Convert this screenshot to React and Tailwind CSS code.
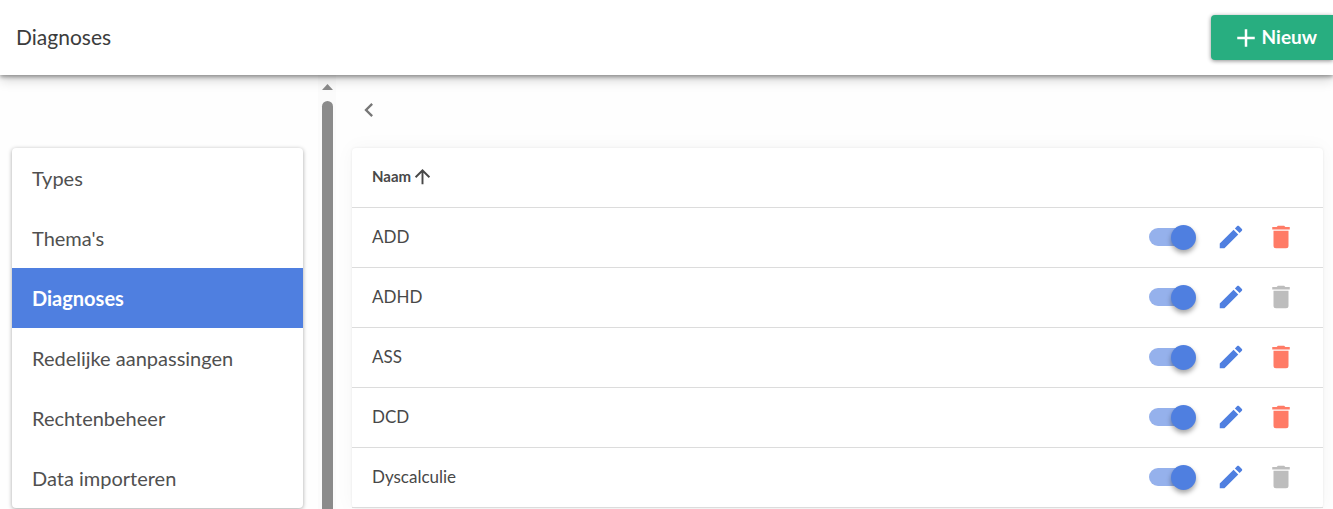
import React, { useState } from 'react'

const MENU = ['Types', "Thema's", 'Diagnoses', 'Redelijke aanpassingen', 'Rechtenbeheer', 'Data importeren']

const DIAGNOSES = [
  { name: 'ADD', active: true, removable: true },
  { name: 'ADHD', active: true, removable: false },
  { name: 'ASS', active: true, removable: true },
  { name: 'DCD', active: true, removable: true },
  { name: 'Dyscalculie', active: true, removable: false },
]

const PATHS = {
  plus: 'M19,13H13V19H11V13H5V11H11V5H13V11H19V13Z',
  chevronLeft: 'M15.41,16.58L10.83,12L15.41,7.41L14,6L8,12L14,18L15.41,16.58Z',
  arrowUp: 'M13,20H11V8L5.5,13.5L4.08,12.08L12,4.16L19.92,12.08L18.5,13.5L13,8V20Z',
  pencil: 'M20.71,7.04C21.1,6.65 21.1,6 20.71,5.63L18.37,3.29C18,2.9 17.35,2.9 16.96,3.29L15.12,5.12L18.87,8.87M3,17.25V21H6.75L17.81,9.93L14.06,6.18L3,17.25Z',
  trash: 'M19,4H15.5L14.5,3H9.5L8.5,4H5V6H19M6,19A2,2 0 0,0 8,21H16A2,2 0 0,0 18,19V7H6V19Z',
}

function Icon({ name, size = 30 }) {
  return (
    <svg viewBox="0 0 24 24" width={size} height={size} fill="currentColor" aria-hidden="true" className="block shrink-0">
      <path d={PATHS[name]} />
    </svg>
  )
}

function Toggle({ label, checked, onChange }) {
  return (
    <label className="relative flex h-[25px] w-[47px] cursor-pointer items-center">
      <input type="checkbox" aria-label={label} checked={checked} onChange={onChange} className="peer sr-only" />
      <span className="h-[18px] w-[44px] rounded-full bg-gray-300 peer-checked:bg-[#95b1ec]" />
      <span className="absolute left-0 size-[25px] rounded-full bg-white shadow-[0_3px_5px_rgba(0,0,0,0.35)] peer-checked:left-auto peer-checked:right-0 peer-checked:bg-[#4f7fe0]" />
    </label>
  )
}

function Header() {
  return (
    <header className="relative z-10 flex h-[75px] shrink-0 items-center justify-between bg-white pl-4 shadow-[0_2px_4px_rgba(0,0,0,0.35),0_4px_12px_rgba(0,0,0,0.2)]">
      <h1 className="pb-px text-[21px] text-[#3c3c3c]">Diagnoses</h1>
      <button className="flex h-[45px] items-center gap-px rounded-l bg-[#28ae80] pr-4 pl-5 text-[19px] font-bold text-white shadow-[0_1px_4px_rgba(0,0,0,0.45)]">
        <Icon name="plus" />
        Nieuw
      </button>
    </header>
  )
}

function Sidebar() {
  return (
    <aside className="flex w-[336px] shrink-0">
      <nav className="min-w-0 flex-1 pt-[73px] pr-[15px] pl-3">
        <ul className="overflow-hidden rounded bg-white shadow-[0_1px_4px_rgba(0,0,0,0.35)]">
          {MENU.map(item => (
            <li key={item}>
              <a
                href="#"
                aria-current={item === 'Diagnoses' ? 'page' : undefined}
                className="flex h-[60px] items-center px-5 pb-px text-xl text-[#505050] aria-[current]:bg-[#4f7fe0] aria-[current]:font-bold aria-[current]:text-white"
              >
                {item}
              </a>
            </li>
          ))}
        </ul>
      </nav>
      <div className="flex w-[18px] shrink-0 flex-col items-center bg-[#fbfbfb] pt-[9px]" aria-hidden="true">
        <svg viewBox="0 0 11 6" width="11" height="6" className="shrink-0 fill-[#8b8b8b]">
          <path d="M5.5 0L11 6H0Z" />
        </svg>
        <div className="mt-[11px] w-[11px] flex-1 rounded-t-full bg-[#8b8b8b]" />
      </div>
    </aside>
  )
}

function DiagnosesTable() {
  const [rows, setRows] = useState(DIAGNOSES)

  const toggle = (name) =>
    setRows(rows.map(row => (row.name === name ? { ...row, active: !row.active } : row)))

  return (
    <div className="rounded bg-white shadow-[0_0_20px_rgba(0,0,0,0.04),0_0_3px_rgba(0,0,0,0.08)]">
      <table className="w-full border-separate border-spacing-0 text-left text-[#484848]">
        <thead>
          <tr>
            <th scope="col" className="h-[60px] border-b border-[#dcdcdc] px-5 pb-0.5 font-normal">
              <button className="flex items-center text-[15px] font-bold">
                Naam
                <Icon name="arrowUp" size={23} />
              </button>
            </th>
            <th className="border-b border-[#dcdcdc]" aria-label="Acties" />
          </tr>
        </thead>
        <tbody>
          {rows.map(({ name, active, removable }) => (
            <tr key={name}>
              <td className="h-[60px] border-b border-[#dcdcdc] px-5 pb-0.5 text-[17px]">{name}</td>
              <td className="border-b border-[#dcdcdc] pr-[27px] pb-px">
                <div className="flex items-center justify-end gap-5">
                  <Toggle label={`${name} actief`} checked={active} onChange={() => toggle(name)} />
                  <button aria-label={`${name} bewerken`} className="text-[#4f7fe0]">
                    <Icon name="pencil" />
                  </button>
                  <button aria-label={`${name} verwijderen`} disabled={!removable} className="text-[#ff7b66] disabled:text-[#bdbdbd]">
                    <Icon name="trash" />
                  </button>
                </div>
              </td>
            </tr>
          ))}
        </tbody>
      </table>
    </div>
  )
}

export default function App() {
  return (
    <div className="flex h-screen flex-col overflow-hidden bg-[#fefefe] font-[Lato,sans-serif]">
      <Header />
      <div className="flex min-h-0 flex-1">
        <Sidebar />
        <main className="min-w-0 flex-1 pt-[21px] pr-[10px] pl-4">
          <button aria-label="Terug" className="mb-6 block px-[3px] text-[#777]">
            <Icon name="chevronLeft" size={28} />
          </button>
          <DiagnosesTable />
        </main>
      </div>
    </div>
  )
}
